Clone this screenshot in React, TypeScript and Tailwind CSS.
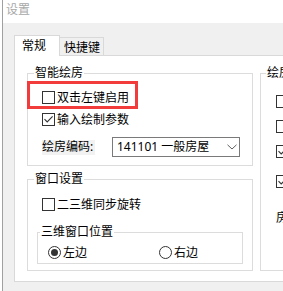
import React from 'react';

const Check: React.FC<{ checked?: boolean }> = ({ checked }) => (
  <span className="w-[13px] h-[13px] border border-[#333333] bg-white flex items-center justify-center shrink-0">
    {checked && (
      <svg width="11" height="11" viewBox="0 0 11 11">
        <path d="M1.5 5.2 L4.2 8 L9.6 2.4" fill="none" stroke="#333333" strokeWidth="1.1" />
      </svg>
    )}
  </span>
);

const Radio: React.FC<{ checked?: boolean }> = ({ checked }) => (
  <span className="w-[13px] h-[13px] rounded-full border border-[#333333] bg-white flex items-center justify-center shrink-0">
    {checked && <span className="w-[7px] h-[7px] rounded-full bg-[#333333]" />}
  </span>
);

const CheckRow: React.FC<{ checked?: boolean; label: string; className?: string }> = ({ checked, label, className }) => (
  <div className={`flex items-center h-[13px] ${className ?? ''}`}>
    <Check checked={checked} />
    <span className="ml-[2px] whitespace-nowrap">{label}</span>
  </div>
);

const App: React.FC = () => {
  return (
    <div className="w-[283px] h-[291px] overflow-hidden flex bg-[#f0f0f0] text-[12px] leading-[14px] text-black font-['Noto_Sans','Noto_Sans_CJK_SC',sans-serif]">
      <div className="w-[2px] bg-white shrink-0" />
      <div className="w-px bg-[#a0a0a0] shrink-0" />
      <div className="flex-1 flex flex-col min-w-0">
        {/* title bar */}
        <div className="h-[23px] bg-white shrink-0 pl-[3px] pt-[3px] text-[#a8a8a8]">设置</div>

        <div className="pl-[11px] pt-[12px] flex flex-col">
          {/* tabs */}
          <div className="h-[21px] flex items-end relative z-10">
            <div className="w-[46px] h-[21px] bg-white border border-b-0 border-[#d9d9d9] pl-[7px] pt-[3px]">常规</div>
            <div className="w-[44px] h-[18px] bg-[#f0f0f0] border border-l-0 border-b-0 border-[#d9d9d9] pl-[4px] pt-[3px] mb-px">快捷键</div>
          </div>

          {/* tab panel */}
          <div className="-mt-px h-[227px] w-[300px] border border-[#d9d9d9] bg-white flex pl-[12px] pt-[17px]">
            {/* left column */}
            <div className="w-[226px] flex flex-col shrink-0">
              {/* 智能绘房 */}
              <div className="relative border border-[#dcdcdc] h-[93px] pl-[14px] flex flex-col">
                <span className="absolute -top-[8px] left-[6px] px-[1px] bg-white">智能绘房</span>
                <div className="absolute left-[-1px] top-[7px] w-[111px] h-[28px] border-[3px] border-[#f23b3b]" />
                <CheckRow label="双击左键启用" className="mt-[17px]" />
                <CheckRow checked label="输入绘制参数" className="mt-[9px]" />
                <div className="flex items-center mt-[11px] h-[20px]">
                  <span className="w-[53px] h-[15px] bg-[#f2f2f2] whitespace-nowrap flex items-center">绘房编码:</span>
                  <div className="ml-[17px] w-[128px] h-[20px] border border-[#7a7a7a] flex items-center pl-[4px]">
                    <span className="whitespace-nowrap">141101 一般房屋</span>
                    <svg className="ml-auto mr-[2px]" width="10" height="6" viewBox="0 0 10 6">
                      <path d="M0.5 0.8 L5 5 L9.5 0.8" fill="none" stroke="#606060" strokeWidth="1" />
                    </svg>
                  </div>
                </div>
              </div>

              {/* 窗口设置 */}
              <div className="relative border border-[#dcdcdc] h-[92px] mt-[13px] pl-[14px] flex flex-col">
                <span className="absolute -top-[8px] left-[6px] px-[1px] bg-white">窗口设置</span>
                <CheckRow label="二三维同步旋转" className="mt-[18px]" />
                <div className="relative border border-[#dcdcdc] h-[32px] mt-[21px] -ml-[5px] w-[206px] flex pl-[10px] pt-[13px]">
                  <span className="absolute -top-[8px] left-[2px] px-[1px] bg-white">三维窗口位置</span>
                  <div className="w-[111px] flex items-center h-[13px]">
                    <Radio checked />
                    <span className="ml-[2px]">左边</span>
                  </div>
                  <div className="flex items-center h-[13px]">
                    <Radio />
                    <span className="ml-[2px]">右边</span>
                  </div>
                </div>
              </div>
            </div>

            {/* right column (cut off) */}
            <div className="relative border border-[#dcdcdc] h-[198px] ml-[7px] w-[60px] shrink-0 pl-[15px] flex flex-col">
              <span className="absolute -top-[8px] left-[5px] px-[1px] bg-white">绘房</span>
              <CheckRow label="显示" className="mt-[21px]" />
              <CheckRow label="显示" className="mt-[12px]" />
              <CheckRow checked label="显示" className="mt-[12px]" />
              <CheckRow checked label="显示" className="mt-[17px]" />
              <span className="mt-[23px] whitespace-nowrap">房屋</span>
            </div>
          </div>
        </div>
      </div>
    </div>
  );
};

export default App;
